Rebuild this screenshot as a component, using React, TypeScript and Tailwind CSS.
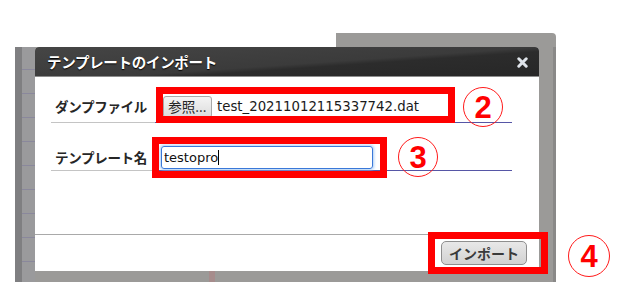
import React from "react";

const jp = { fontFamily: '"Noto Sans CJK JP", "Noto Sans", sans-serif' };
const latin = { fontFamily: '"DejaVu Sans", "Noto Sans CJK JP", sans-serif' };

function Circled({ n, className }: { n: string; className: string }) {
  return (
    <div
      className={`absolute flex items-center justify-center rounded-full border-[1.5px] border-[#ff1a1a] text-[#ff0000] font-bold ${className}`}
      style={{ fontFamily: '"Liberation Sans", Arial, sans-serif' }}
    >
      <span className="leading-none text-[31px] mt-[1px]">{n}</span>
    </div>
  );
}

export default function App() {
  return (
    <div className="relative w-[629px] h-[300px] bg-white overflow-hidden" style={jp}>
      {/* backdrop window */}
      <div className="ml-[15px] pt-[33px] w-[541px]">
        <div className="flex justify-end h-[14px]">
          <div className="w-[220px] h-full bg-[#9b9a98] rounded-tr-[4px]" />
        </div>
        <div className="flex h-[235px] bg-[#9b9a98]">
          {/* left strip */}
          <div className="w-[20px] flex">
            <div className="w-[7px] bg-[#7f7f81]" />
            <div className="flex-1 bg-[repeating-linear-gradient(180deg,#9a9a9c_0px,#9a9a9c_22px,#8a889c_22px,#8a889c_23px,#9a9a9c_23px,#9a9a9c_24px)]" />
          </div>
          {/* dialog column */}
          <div className="w-[504px] flex flex-col">
            <div className="h-[224px] flex flex-col bg-white rounded-t-[4px] overflow-hidden">
              {/* header */}
              <div className="h-[30px] shrink-0 flex items-center justify-between pl-[12px] pr-[11px] border-b border-[#8d8d8d] bg-[linear-gradient(176deg,#454545_0%,#3b3b3b_55%,#2c2c2c_62%,#272727_100%)]">
                <span
                  className="text-white text-[14.5px] font-semibold tracking-[-0.3px]"
                  style={{ textShadow: "0 1px 1px #000" }}
                >
                  テンプレートのインポート
                </span>
                <svg width="11" height="11" viewBox="0 0 11 11" className="mt-[1px]">
                  <path d="M1.8 1.8 L9.2 9.2 M9.2 1.8 L1.8 9.2" stroke="#dfe4ea" strokeWidth="3" strokeLinecap="round" />
                </svg>
              </div>
              {/* body */}
              <div className="flex-1 flex flex-col pl-[16px] pr-[27px]">
                <div className="h-[46px] flex">
                  <div className="w-[104px] border-b border-[#c4c4c4] flex items-center pt-[14px] pl-[4px]">
                    <span className="text-[13.5px] font-semibold tracking-[-0.3px] text-[#262626]">ダンプファイル</span>
                  </div>
                  <div className="flex-1 border-b border-[#5656a6] flex items-center pt-[14px] pl-[8px]">
                    <div className="w-[49px] h-[22px] shrink-0 flex items-center justify-center border border-[#a8a8a8] rounded-[3px] bg-[linear-gradient(180deg,#f4f4f4,#dcdcdc)] text-[13.5px] text-[#222]">
                      参照...
                    </div>
                    <span className="ml-[5px] text-[13.3px] text-[#1a1a1a]" style={latin}>
                      test_20211012115337742.dat
                    </span>
                  </div>
                </div>
                <div className="h-[48px] flex">
                  <div className="w-[104px] border-b border-[#c4c4c4] flex items-center pt-[22px] pl-[4px]">
                    <span className="text-[13.5px] font-semibold tracking-[-0.3px] text-[#262626]">テンプレート名</span>
                  </div>
                  <div className="flex-1 border-b border-[#5656a6] flex items-center pt-[22px] pl-[6px]">
                    <div className="w-[212px] h-[23px] flex items-center border border-[#3a78d8] rounded-[3px] shadow-[0_0_3px_1px_#a9cdf5] pl-[2px] text-[13px] text-[#111]" style={latin}>
                      testopro
                      <span className="inline-block w-[1px] h-[15px] bg-black" />
                    </div>
                  </div>
                </div>
                <div className="flex-1" />
              </div>
              {/* footer */}
              <div className="h-[37px] shrink-0 border-t border-[#a9a9a9] flex items-center justify-end pr-[12px]">
                <div className="w-[86px] h-[24px] flex items-center justify-center border border-[#8e8e8e] rounded-[5px] bg-[linear-gradient(180deg,#e8e8e8,#d2d2d2)] text-[14px] font-bold text-[#3a3a3a]">
                  インポート
                </div>
              </div>
            </div>
            <div className="flex-1 relative">
              <div className="absolute left-[174px] top-0 w-[6px] h-full bg-[#a68c8c]" />
            </div>
          </div>
          {/* right strip */}
          <div className="w-[17px] flex">
            <div className="flex-1 bg-[#9b9a98]" />
            <div className="w-[3px] bg-[#8a8988]" />
          </div>
        </div>
      </div>

      {/* annotations */}
      <div className="absolute left-[156px] top-[87px] w-[299px] h-[36px] border-[7px] border-[#ff0000]" />
      <div className="absolute left-[152px] top-[137px] w-[235px] h-[41px] border-[7px] border-[#ff0000]" />
      <div className="absolute left-[428px] top-[232px] w-[120px] h-[42px] border-[7px] border-[#ff0000]" />

      <Circled n="2" className="left-[463px] top-[87px] w-[40px] h-[40px]" />
      <Circled n="3" className="left-[398px] top-[137px] w-[40px] h-[40px]" />
      <Circled n="4" className="left-[568px] top-[235px] w-[42px] h-[42px]" />
    </div>
  );
}
